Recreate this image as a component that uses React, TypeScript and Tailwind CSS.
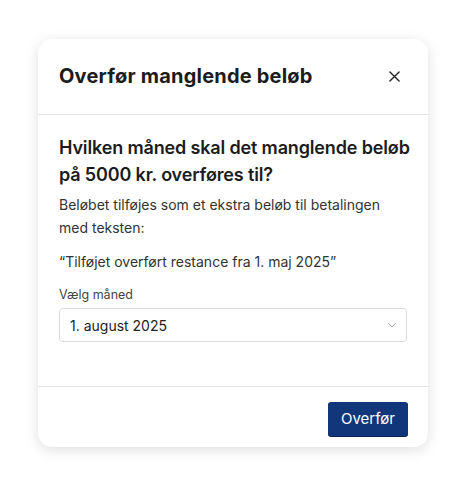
import { useState } from "react";

export default function App() {
    const [month, setMonth] = useState("2025-08");

    return (
        <div
            className="min-h-[486px] w-full bg-white pt-[39px]"
            style={{ fontFamily: "Inter, 'Noto Sans', sans-serif" }}
        >
            <div className="mx-auto w-[390px] rounded-[14px] bg-white shadow-[0_3px_14px_rgba(0,0,0,0.13)]">
                <div className="flex items-center justify-between border-b border-[#e6e6e6] pb-[24px] pl-[21px] pr-[24px] pt-[23px]">
                    <h2 className="text-[20px] font-bold leading-[28px] tracking-[0.2px] text-[#1c1c1c]">
                        Overfør manglende beløb
                    </h2>
                    <button className="flex h-5 w-5 items-center justify-center text-[#222]">
                        <svg
                            width="11"
                            height="11"
                            viewBox="0 0 12 12"
                            fill="none"
                            stroke="currentColor"
                            strokeWidth="1.5"
                            strokeLinecap="round"
                        >
                            <path d="M1 1L11 11M11 1L1 11" />
                        </svg>
                    </button>
                </div>
                <div className="px-[21px] pb-[44px] pt-[19px]">
                    <h3 className="-mr-[14px] text-[18px] font-semibold leading-[27px] tracking-[-0.15px] text-[#1c1c1c]">
                        Hvilken måned skal det manglende beløb på 5000 kr.
                        overføres til?
                    </h3>
                    <p className="mt-[5px] text-[14px] leading-[23px] text-[#333]">
                        Beløbet tilføjes som et ekstra beløb til betalingen med
                        teksten:
                    </p>
                    <p className="mt-[11px] text-[14px] leading-[23px] text-[#333]">
                        “Tilføjet overført restance fra 1. maj 2025”
                    </p>
                    <label className="mt-[13px] block text-[12.5px] leading-[18px] text-[#444]">
                        Vælg måned
                    </label>
                    <div className="relative mt-[4px]">
                        <select
                            value={month}
                            onChange={(e) => setMonth(e.target.value)}
                            className="h-[34px] w-full appearance-none rounded-[4px] border border-[#dcdcdc] bg-white pl-[10px] pr-8 text-[14px] text-[#222] outline-none"
                        >
                            <option value="2025-06">1. juni 2025</option>
                            <option value="2025-07">1. juli 2025</option>
                            <option value="2025-08">1. august 2025</option>
                        </select>
                        <svg
                            className="pointer-events-none absolute right-[10px] top-[14px]"
                            width="10"
                            height="6"
                            viewBox="0 0 10 6"
                            fill="none"
                            stroke="#aaa"
                            strokeWidth="1"
                        >
                            <path d="M1 1L5 5L9 1" />
                        </svg>
                    </div>
                </div>
                <div className="flex justify-end border-t border-[#e6e6e6] pb-[11px] pr-[20px] pt-[15px]">
                    <button className="h-[34px] w-[80px] rounded-[3px] bg-[#12367a] text-[15px] text-white shadow-[0_1px_0_#0b2350]">
                        Overfør
                    </button>
                </div>
            </div>
        </div>
    );
}
